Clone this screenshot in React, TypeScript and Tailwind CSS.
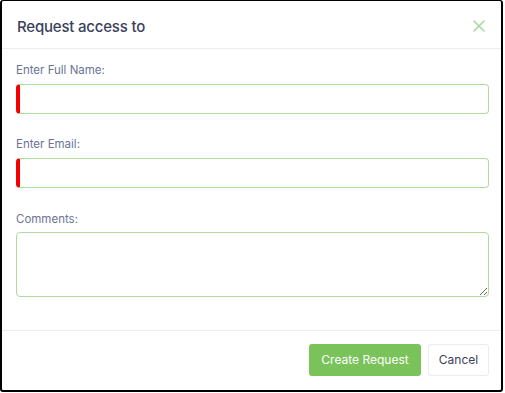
import React from "react";

export default function App() {
  const font = { fontFamily: "Inter, 'Noto Sans', sans-serif" };
  return (
    <div className="w-[505px] h-[393px] bg-white" style={font}>
      <div className="w-[503px] h-[392px] border-t border-l-2 border-r-2 border-b-2 border-black rounded-[3px] flex flex-col bg-white">
        <div className="h-[48px] flex items-center justify-between pt-[5px] pl-[15px] pr-[16px] border-b border-[#ececec]">
          <span className="text-[15px] text-[#3a3f5c] font-medium tracking-[-0.2px]">Request access to</span>
          <svg width="12" height="12" viewBox="0 0 12 12" className="mt-[-2px]">
            <path d="M1 1 L11 11 M11 1 L1 11" stroke="#a6d79a" strokeWidth="1.5" strokeLinecap="round" />
          </svg>
        </div>
        <div className="flex flex-col pl-[14px] pr-[12px] pt-[12px] flex-1">
          <label className="text-[11.5px] leading-[18px] text-[#6b7396] mb-[5px]">Enter Full Name:</label>
          <div className="h-[30px] rounded-[4px] border border-[#addc9c] border-l-[4px] border-l-[#f40000]" />
          <label className="text-[11.5px] leading-[18px] text-[#6b7396] mt-[21px] mb-[5px]">Enter Email:</label>
          <div className="h-[30px] rounded-[4px] border border-[#addc9c] border-l-[4px] border-l-[#f40000]" />
          <label className="text-[11.5px] leading-[18px] text-[#6b7396] mt-[22px] mb-[4px]">Comments:</label>
          <textarea className="h-[65px] rounded-[4px] border border-[#addc9c] outline-none resize-y" />
        </div>
        <div className="h-[60px] border-t border-[#ececec] flex items-center justify-end gap-[7px] pr-[12px] pb-[1px]">
          <button className="h-[32px] w-[112px] rounded-[3px] bg-[#79c35a] text-white text-[12px]">Create Request</button>
          <button className="h-[32px] w-[61px] rounded-[3px] bg-white border border-[#ececec] text-[#3a3f5c] text-[12px]">Cancel</button>
        </div>
      </div>
    </div>
  );
}
